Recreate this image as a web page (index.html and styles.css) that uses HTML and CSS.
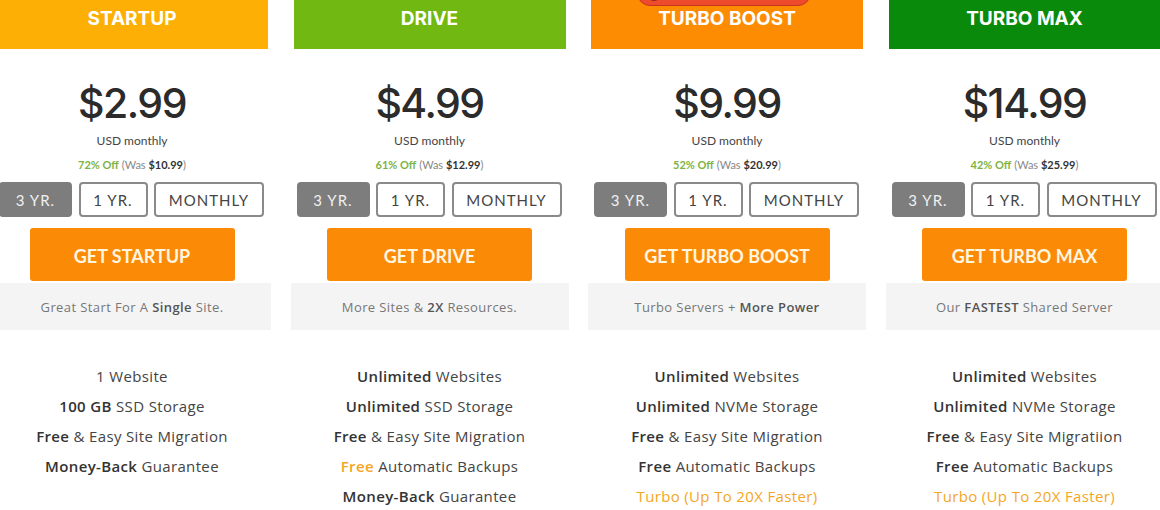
FILE: index.html
```html
<!DOCTYPE html>
<html>

	<head>
		<meta charset="utf-8" />
		<title>Hosting Plans</title>
		<link rel="stylesheet" href="styles.css">
	</head>

	<body>
		<div id="plans">
			<div class="plan">
				<div class="plan_head head_startup">STARTUP</div>
				<div class="price">$2.99</div>
				<div class="per">USD monthly</div>
				<div class="off"><span class="pct">72% Off</span> (Was <b>$10.99</b>)</div>
				<ul class="term">
					<li class="term_on t3">3 YR.</li>
					<li class="t1">1 YR.</li>
					<li class="tm">MONTHLY</li>
				</ul>
				<a class="buy" href="#">GET STARTUP</a>
				<div class="tag">Great Start For A <b>Single</b> Site.</div>
				<ul class="feat">
					<li>1 Website</li>
					<li><b>100 GB</b> SSD Storage</li>
					<li><b>Free</b> &amp; Easy Site Migration</li>
					<li><b>Money-Back</b> Guarantee</li>
				</ul>
			</div>
			<div class="plan">
				<div class="plan_head head_drive">DRIVE</div>
				<div class="price">$4.99</div>
				<div class="per">USD monthly</div>
				<div class="off"><span class="pct">61% Off</span> (Was <b>$12.99</b>)</div>
				<ul class="term">
					<li class="term_on t3">3 YR.</li>
					<li class="t1">1 YR.</li>
					<li class="tm">MONTHLY</li>
				</ul>
				<a class="buy" href="#">GET DRIVE</a>
				<div class="tag">More Sites &amp; <b>2X</b> Resources.</div>
				<ul class="feat">
					<li><b>Unlimited</b> Websites</li>
					<li><b>Unlimited</b> SSD Storage</li>
					<li><b>Free</b> &amp; Easy Site Migration</li>
					<li><b class="hot">Free</b> Automatic Backups</li>
					<li><b>Money-Back</b> Guarantee</li>
				</ul>
			</div>
			<div class="plan">
				<div class="badge"><i></i></div>
				<div class="plan_head head_boost">TURBO BOOST</div>
				<div class="price">$9.99</div>
				<div class="per">USD monthly</div>
				<div class="off"><span class="pct">52% Off</span> (Was <b>$20.99</b>)</div>
				<ul class="term">
					<li class="term_on t3">3 YR.</li>
					<li class="t1">1 YR.</li>
					<li class="tm">MONTHLY</li>
				</ul>
				<a class="buy" href="#">GET TURBO BOOST</a>
				<div class="tag">Turbo Servers + <b>More Power</b></div>
				<ul class="feat">
					<li><b>Unlimited</b> Websites</li>
					<li><b>Unlimited</b> NVMe Storage</li>
					<li><b>Free</b> &amp; Easy Site Migration</li>
					<li><b>Free</b> Automatic Backups</li>
					<li class="hot">Turbo (Up To 20X Faster)</li>
				</ul>
			</div>
			<div class="plan">
				<div class="plan_head head_max">TURBO MAX</div>
				<div class="price">$14.99</div>
				<div class="per">USD monthly</div>
				<div class="off"><span class="pct">42% Off</span> (Was <b>$25.99</b>)</div>
				<ul class="term">
					<li class="term_on t3">3 YR.</li>
					<li class="t1">1 YR.</li>
					<li class="tm">MONTHLY</li>
				</ul>
				<a class="buy" href="#">GET TURBO MAX</a>
				<div class="tag">Our <b>FASTEST</b> Shared Server</div>
				<ul class="feat">
					<li><b>Unlimited</b> Websites</li>
					<li><b>Unlimited</b> NVMe Storage</li>
					<li><b>Free</b> &amp; Easy Site Migratiion</li>
					<li><b>Free</b> Automatic Backups</li>
					<li class="hot">Turbo (Up To 20X Faster)</li>
				</ul>
			</div>
		</div>
	</body>

</html>
```

FILE: styles.css
```css
* {
	margin: 0;
	padding: 0;
}

body {
	background: #fff;
	font-family: Lato, "Open Sans", sans-serif;
	color: #444;
	overflow: hidden;
}

li {
	list-style: none;
}

#plans {
	display: grid;
	grid-template-columns: repeat(4, 272px);
	column-gap: 25.5px;
	margin-left: -4px;
}

.plan {
	position: relative;
	text-align: center;
}

.plan_head {
	height: 49px;
	padding-top: 7px;
	box-sizing: border-box;
	line-height: 24px;
	font-size: 19px;
	font-weight: bold;
	color: #fff;
	font-family: Inter, Lato, sans-serif;
}

.head_startup {
	background: #fdaf05;
}

.head_drive {
	background: #71b812;
}

.head_boost {
	background: #fd8c03;
}

.head_max {
	background: #0a8a0a;
}

/* red ribbon above the popular plan, cut off by the top edge */
.badge {
	position: absolute;
	top: -20px;
	left: 46px;
	width: 172px;
	height: 24px;
	border-radius: 13px;
	background: #ee4a2c;
	border: 1px solid #c8331d;
	z-index: 2;
}

.badge i {
	position: absolute;
	left: 9px;
	top: 6px;
	width: 14px;
	height: 14px;
	border-radius: 7px;
	background: #9a2a18;
}

.price {
	margin-top: 29px;
	font-family: Inter, "Noto Sans", sans-serif;
	font-size: 41px;
	letter-spacing: -1.5px;
	line-height: 50px;
	font-weight: 500;
	color: #2b2b2b;
}

.per {
	margin-top: 5px;
	font-size: 12px;
	line-height: 16px;
	color: #444;
}

.off {
	margin-top: 8px;
	font-size: 11px;
	line-height: 16px;
	color: #888;
}

.off .pct {
	color: #7cb342;
	font-weight: bold;
}

.off b {
	color: #333;
}

.term {
	display: flex;
	gap: 6.5px;
	margin-top: 9px;
	padding-left: 3px;
}

.term li {
	height: 35px;
	box-sizing: border-box;
	border: 2px solid #8a8a8a;
	border-radius: 4px;
	line-height: 32px;
	font-size: 15px;
	letter-spacing: 1px;
	color: #444;
}

.term .t3 {
	width: 73px;
}

.term .t1 {
	width: 69px;
}

.term .tm {
	width: 110px;
}

.term li.term_on {
	background: #7d7d7d;
	border-color: #7d7d7d;
	color: #f0f0f0;
}

.buy {
	display: block;
	width: 205px;
	height: 53px;
	margin: 11px auto 0;
	border-radius: 3px;
	background: #fb8a06;
	color: #fff6e0;
	font-size: 18px;
	font-weight: bold;
	line-height: 56px;
	text-decoration: none;
}

.tag {
	margin: 2px -3px 0;
	height: 47px;
	line-height: 48px;
	background: #f4f4f4;
	font-family: "Open Sans", Lato, sans-serif;
	font-size: 13px;
	letter-spacing: 0.4px;
	color: #777;
}

.tag b {
	font-weight: 600;
	color: #555;
}

.feat {
	margin-top: 31px;
	font-family: "Open Sans", Lato, sans-serif;
	font-size: 15px;
	letter-spacing: 0.35px;
	line-height: 30px;
	color: #444;
}

.feat b {
	font-weight: 600;
	color: #333;
}

.feat .hot {
	color: #f5a623;
}
```
